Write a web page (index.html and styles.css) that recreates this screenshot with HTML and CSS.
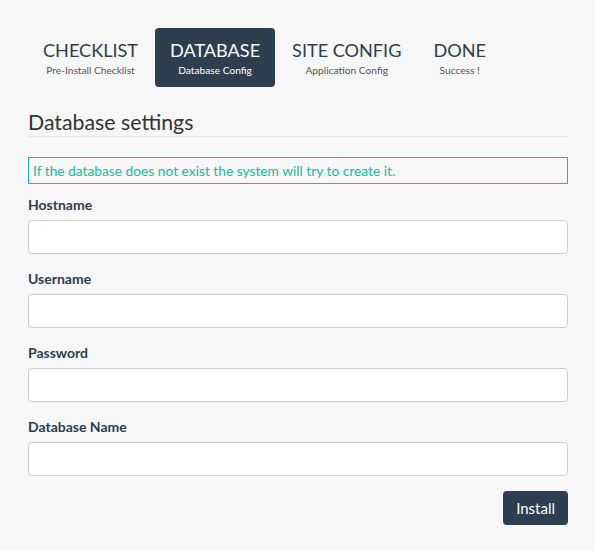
FILE: index.html
```html
<!DOCTYPE html>
<html>
<head>
<meta charset="utf-8">
<link rel="stylesheet" href="styles.css">
</head>
<body>
<div class="page">
  <ul class="steps">
    <li class="step"><span class="step-title">CHECKLIST</span><span class="step-sub">Pre-Install Checklist</span></li>
    <li class="step active"><span class="step-title">DATABASE</span><span class="step-sub">Database Config</span></li>
    <li class="step"><span class="step-title">SITE CONFIG</span><span class="step-sub">Application Config</span></li>
    <li class="step"><span class="step-title">DONE</span><span class="step-sub">Success !</span></li>
  </ul>
  <h3 class="section-title">Database settings</h3>
  <div class="notice">If the database does not exist the system will try to create it.</div>
  <form class="form">
    <div class="field"><label class="label">Hostname</label><input class="input" type="text"></div>
    <div class="field"><label class="label">Username</label><input class="input" type="text"></div>
    <div class="field"><label class="label">Password</label><input class="input" type="password"></div>
    <div class="field"><label class="label">Database Name</label><input class="input" type="text"></div>
    <div class="actions"><button class="btn" type="button">Install</button></div>
  </form>
</div>
</body>
</html>
```
FILE: styles.css
```css
* { box-sizing: border-box; }
html, body { margin: 0; padding: 0; }
body {
  background: #f7f7f7;
  font-family: Lato, "Open Sans", sans-serif;
  color: #2c3e50;
  font-size: 15px;
}
.page {
  padding: 28px 27px 0 28px;
}
.steps {
  list-style: none;
  margin: 0;
  padding: 0;
  display: flex;
  gap: 2px;
}
.step {
  display: flex;
  flex-direction: column;
  align-items: center;
  padding: 11px 15px 9px;
  border-radius: 4px;
  height: 59px;
}
.step.active {
  background: #2c3e50;
  color: #fff;
}
.step-title {
  font-size: 18.1px;
  line-height: 23px;
}
.step-sub {
  margin-top: 1px;
  font-size: 10.2px;
  line-height: 14px;
  color: #555;
}
.step.active .step-sub { color: #fff; }
.section-title {
  margin: 22px 0 0;
  font-size: 21.3px;
  font-weight: 400;
  line-height: 27px;
  border-bottom: 1px solid #e6e6e6;
  color: #333;
}
.notice {
  margin-top: 20px;
  border: 1px solid #18bc9c;
  color: #18bc9c;
  font-size: 13.75px;
  line-height: 17px;
  padding: 4px 4px;
}
.form { margin: 0; }
.field {
  display: flex;
  flex-direction: column;
  margin-top: 12px;
}
.field + .field { margin-top: 16px; }
.label {
  font-weight: 700;
  font-size: 14px;
  line-height: 18px;
  margin-bottom: 6px;
}
.input {
  height: 34px;
  border: 1px solid #cccccc;
  border-radius: 4px;
  background: #fff;
  font: inherit;
}
.actions {
  display: flex;
  justify-content: flex-end;
  margin-top: 15px;
}
.btn {
  background: #2c3e50;
  color: #fff;
  border: 0;
  border-radius: 4px;
  height: 34px;
  padding: 0 13px;
  font-family: Lato, sans-serif;
  font-size: 15px;
}
```
